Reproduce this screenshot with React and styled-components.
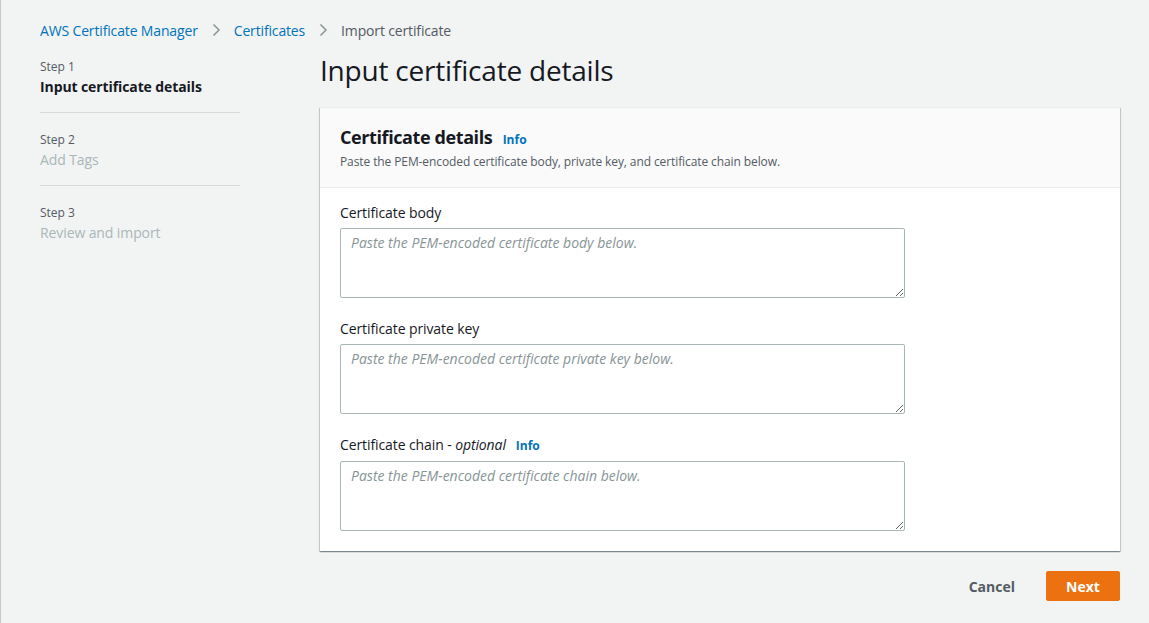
import React from 'react';
import styled, { createGlobalStyle } from 'styled-components';

const GlobalStyle = createGlobalStyle`
  html, body {
    margin: 0;
    padding: 0;
    background: #f2f3f3;
  }
  body {
    font-family: "Open Sans", "Noto Sans", sans-serif;
    color: #16191f;
  }
`;

const fields = [
  { label: 'Certificate body', placeholder: 'Paste the PEM-encoded certificate body below.' },
  { label: 'Certificate private key', placeholder: 'Paste the PEM-encoded certificate private key below.' },
  { label: 'Certificate chain', optional: true, placeholder: 'Paste the PEM-encoded certificate chain below.' },
];

const steps = [
  { step: 'Step 1', title: 'Input certificate details', active: true },
  { step: 'Step 2', title: 'Add Tags' },
  { step: 'Step 3', title: 'Review and import' },
];

const Chevron = () => (
  <svg width="16" height="16" viewBox="0 0 16 16" fill="none">
    <path d="M5.5 2.5 11 8l-5.5 5.5" stroke="#879596" strokeWidth="1.5" />
  </svg>
);

const App = () => {
  return (
    <Page>
      <GlobalStyle />
      <Breadcrumbs>
        <Crumb href="#">AWS Certificate Manager</Crumb>
        <Chevron />
        <Crumb href="#">Certificates</Crumb>
        <Chevron />
        <Current>Import certificate</Current>
      </Breadcrumbs>

      <Layout>
        <StepNav>
          {steps.map((s, i) => (
            <StepItem key={s.step} last={i === steps.length - 1}>
              <StepLabel>{s.step}</StepLabel>
              <StepTitle active={s.active}>{s.title}</StepTitle>
            </StepItem>
          ))}
        </StepNav>

        <Main>
          <Title>Input certificate details</Title>
          <Card>
            <CardHeader>
              <CardTitle>
                Certificate details <InfoLink href="#">Info</InfoLink>
              </CardTitle>
              <CardDescription>
                Paste the PEM-encoded certificate body, private key, and certificate chain below.
              </CardDescription>
            </CardHeader>
            <CardBody>
              {fields.map((f) => (
                <Field key={f.label}>
                  <Label>
                    {f.label}
                    {f.optional && (
                      <>
                        {' - '}<em>optional</em>
                        <InfoLink href="#" small>Info</InfoLink>
                      </>
                    )}
                  </Label>
                  <TextArea placeholder={f.placeholder} />
                </Field>
              ))}
            </CardBody>
          </Card>

          <Actions>
            <LinkButton>Cancel</LinkButton>
            <PrimaryButton>Next</PrimaryButton>
          </Actions>
        </Main>
      </Layout>
    </Page>
  );
};

const Page = styled.div`
  min-height: 623px;
  box-sizing: border-box;
  border-left: 1px solid #c6c9c9;
  padding: 0 29px 0 39px;
`;

const Breadcrumbs = styled.nav`
  display: flex;
  align-items: center;
  gap: 10px;
  height: 60px;
  font-size: 14px;
  letter-spacing: -0.15px;
`;

const Crumb = styled.a`
  color: #0073bb;
  text-decoration: none;
`;

const Current = styled.span`
  color: #545b64;
`;

const Layout = styled.div`
  display: flex;
  gap: 80px;
`;

const StepNav = styled.ol`
  list-style: none;
  margin: -1px 0 0;
  padding: 0;
  width: 200px;
  flex-shrink: 0;
`;

const StepItem = styled.li`
  padding: 0 0 ${(p) => (p.last ? '0' : '15px')};
  margin-bottom: 19px;
  border-bottom: ${(p) => (p.last ? 'none' : '1px solid #d5dbdb')};
`;

const StepLabel = styled.div`
  font-size: 12px;
  line-height: 16px;
  color: #545b64;
  margin-bottom: 2px;
`;

const StepTitle = styled.div`
  font-size: 14px;
  line-height: 20px;
  letter-spacing: -0.1px;
  font-weight: ${(p) => (p.active ? 700 : 400)};
  color: ${(p) => (p.active ? '#16191f' : '#aab7b8')};
`;

const Main = styled.main`
  flex: 1;
`;

const Title = styled.h1`
  margin: -8px 0 0;
  font-size: 28px;
  line-height: 36px;
  font-weight: 400;
  letter-spacing: -0.2px;
  color: #16191f;
  height: 55px;
`;

const Card = styled.section`
  background: #fff;
  border-top: 1px solid #eaeded;
  box-shadow: 0 1px 1px 0 rgba(0, 28, 36, 0.3), 1px 1px 1px 0 rgba(0, 28, 36, 0.15),
    -1px 1px 1px 0 rgba(0, 28, 36, 0.15);
`;

const CardHeader = styled.header`
  background: #fafafa;
  border-bottom: 1px solid #eaeded;
  padding: 17px 20px 17px;
`;

const CardTitle = styled.h2`
  margin: 0;
  font-size: 18px;
  line-height: 24px;
  font-weight: 700;
  letter-spacing: -0.4px;
  color: #16191f;
`;

const InfoLink = styled.a`
  font-size: 12px;
  font-weight: 700;
  color: #0073bb;
  text-decoration: none;
  letter-spacing: 0;
  margin-left: ${(p) => (p.small ? '10px' : '6px')};
  font-style: normal;
`;

const CardDescription = styled.p`
  margin: 2px 0 0;
  font-size: 12px;
  line-height: 16px;
  letter-spacing: -0.1px;
  color: #545b64;
`;

const CardBody = styled.div`
  padding: 15px 20px 20px;
  display: flex;
  flex-direction: column;
  gap: 21px;
`;

const Field = styled.div`
  display: flex;
  flex-direction: column;
  gap: 5px;
`;

const Label = styled.label`
  font-size: 14px;
  line-height: 20px;
  letter-spacing: -0.1px;
  color: #16191f;
`;

const TextArea = styled.textarea`
  width: 565px;
  height: 70px;
  box-sizing: border-box;
  border: 1px solid #aab7b8;
  border-radius: 2px;
  padding: 4px 10px;
  font-family: inherit;
  font-size: 14px;
  line-height: 20px;
  resize: vertical;
  &::placeholder {
    color: #879596;
    font-style: italic;
  }
`;

const Actions = styled.div`
  display: flex;
  justify-content: flex-end;
  align-items: center;
  gap: 20px;
  padding-top: 20px;
`;

const LinkButton = styled.button`
  background: none;
  border: none;
  font-family: inherit;
  font-size: 14px;
  font-weight: 700;
  color: #545b64;
  padding: 4px 11px;
  cursor: pointer;
`;

const PrimaryButton = styled.button`
  background: #ec7211;
  border: 1px solid #ec7211;
  border-radius: 2px;
  font-family: inherit;
  font-size: 14px;
  font-weight: 700;
  color: #fff;
  height: 30px;
  width: 74px;
  cursor: pointer;
`;

export default App;
